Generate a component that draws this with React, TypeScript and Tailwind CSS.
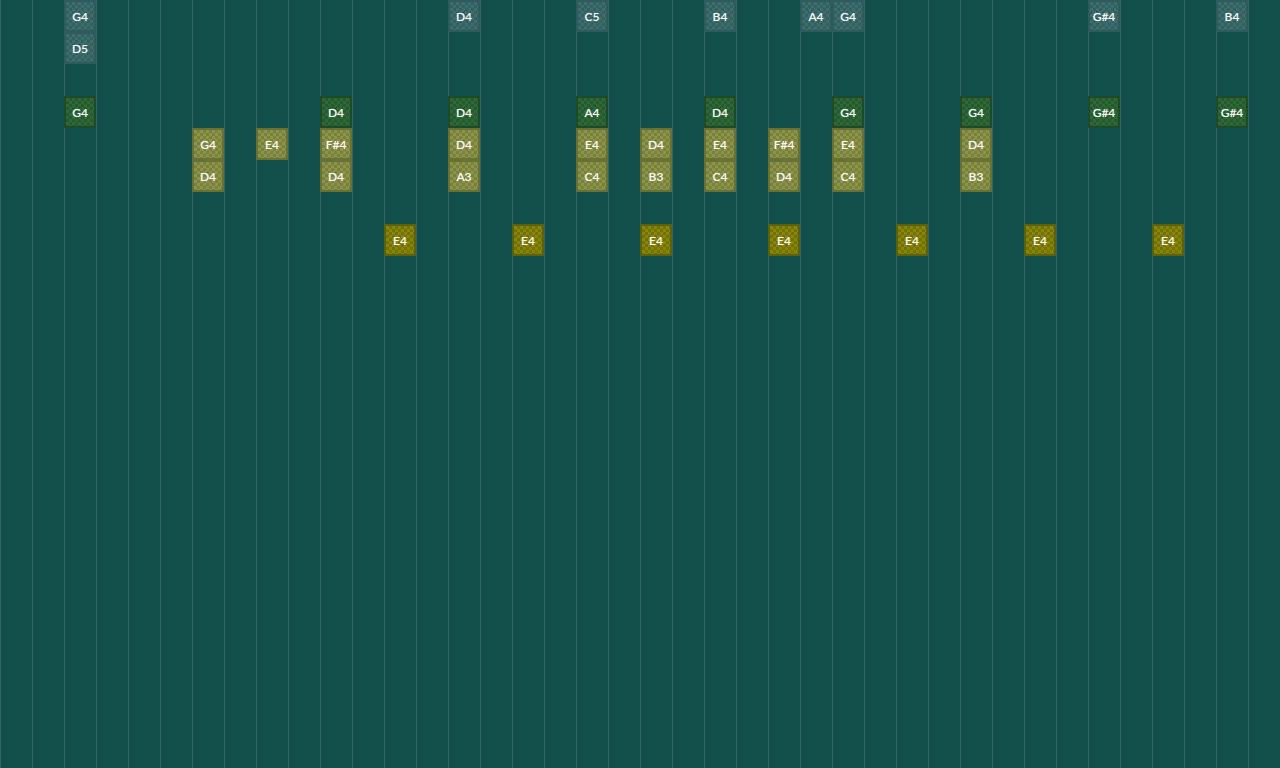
type Kind = "gray" | "green" | "olive" | "yellow";
type Note = { row: number; label: string; kind: Kind };

const noteClass: Record<Kind, string> = {
  gray: "border-[#2f5b5b] bg-[repeating-conic-gradient(#2f6160_0_25%,#3f6d6b_0_50%)]",
  green: "border-[#1f4a28] bg-[repeating-conic-gradient(#245a2f_0_25%,#2e6935_0_50%)]",
  olive: "border-[#667236] bg-[repeating-conic-gradient(#78823e_0_25%,#8f9347_0_50%)]",
  yellow: "border-[#58620f] bg-[repeating-conic-gradient(#72700a_0_25%,#8a8600_0_50%)]",
};

const columns: Record<number, Note[]> = {
  2: [
    { row: 0, label: "G4", kind: "gray" },
    { row: 1, label: "D5", kind: "gray" },
    { row: 3, label: "G4", kind: "green" },
  ],
  6: [
    { row: 4, label: "G4", kind: "olive" },
    { row: 5, label: "D4", kind: "olive" },
  ],
  8: [{ row: 4, label: "E4", kind: "olive" }],
  10: [
    { row: 3, label: "D4", kind: "green" },
    { row: 4, label: "F#4", kind: "olive" },
    { row: 5, label: "D4", kind: "olive" },
  ],
  12: [{ row: 7, label: "E4", kind: "yellow" }],
  14: [
    { row: 0, label: "D4", kind: "gray" },
    { row: 3, label: "D4", kind: "green" },
    { row: 4, label: "D4", kind: "olive" },
    { row: 5, label: "A3", kind: "olive" },
  ],
  16: [{ row: 7, label: "E4", kind: "yellow" }],
  18: [
    { row: 0, label: "C5", kind: "gray" },
    { row: 3, label: "A4", kind: "green" },
    { row: 4, label: "E4", kind: "olive" },
    { row: 5, label: "C4", kind: "olive" },
  ],
  20: [
    { row: 4, label: "D4", kind: "olive" },
    { row: 5, label: "B3", kind: "olive" },
    { row: 7, label: "E4", kind: "yellow" },
  ],
  22: [
    { row: 0, label: "B4", kind: "gray" },
    { row: 3, label: "D4", kind: "green" },
    { row: 4, label: "E4", kind: "olive" },
    { row: 5, label: "C4", kind: "olive" },
  ],
  24: [
    { row: 4, label: "F#4", kind: "olive" },
    { row: 5, label: "D4", kind: "olive" },
    { row: 7, label: "E4", kind: "yellow" },
  ],
  25: [{ row: 0, label: "A4", kind: "gray" }],
  26: [
    { row: 0, label: "G4", kind: "gray" },
    { row: 3, label: "G4", kind: "green" },
    { row: 4, label: "E4", kind: "olive" },
    { row: 5, label: "C4", kind: "olive" },
  ],
  28: [{ row: 7, label: "E4", kind: "yellow" }],
  30: [
    { row: 3, label: "G4", kind: "green" },
    { row: 4, label: "D4", kind: "olive" },
    { row: 5, label: "B3", kind: "olive" },
  ],
  32: [{ row: 7, label: "E4", kind: "yellow" }],
  34: [
    { row: 0, label: "G#4", kind: "gray" },
    { row: 3, label: "G#4", kind: "green" },
  ],
  36: [{ row: 7, label: "E4", kind: "yellow" }],
  38: [
    { row: 0, label: "B4", kind: "gray" },
    { row: 3, label: "G#4", kind: "green" },
  ],
};

function Slot({ note }: { note?: Note }) {
  return (
    <div className="h-[32px] w-[32px] shrink-0">
      {note && (
        <div
          className={`flex h-[32px] w-[32px] items-center justify-center border-2 bg-[length:6px_6px] pt-px text-[12px] font-medium text-white [text-shadow:0_0_1px_rgba(255,255,255,0.3)] ${noteClass[note.kind]}`}
        >
          {note.label}
        </div>
      )}
    </div>
  );
}

export default function App() {
  return (
    <div className="flex h-[768px] w-[1280px] overflow-hidden bg-[#134f4b] font-['Lato',sans-serif]">
      {Array.from({ length: 40 }, (_, col) => (
        <div key={col} className="relative h-full w-[32px] shrink-0">
          <div className="absolute left-0 top-0 h-full w-px bg-[#33625f]" />
          <div className="relative flex flex-col">
            {Array.from({ length: 8 }, (_, row) => (
              <Slot key={row} note={columns[col]?.find((n) => n.row === row)} />
            ))}
          </div>
        </div>
      ))}
    </div>
  );
}
